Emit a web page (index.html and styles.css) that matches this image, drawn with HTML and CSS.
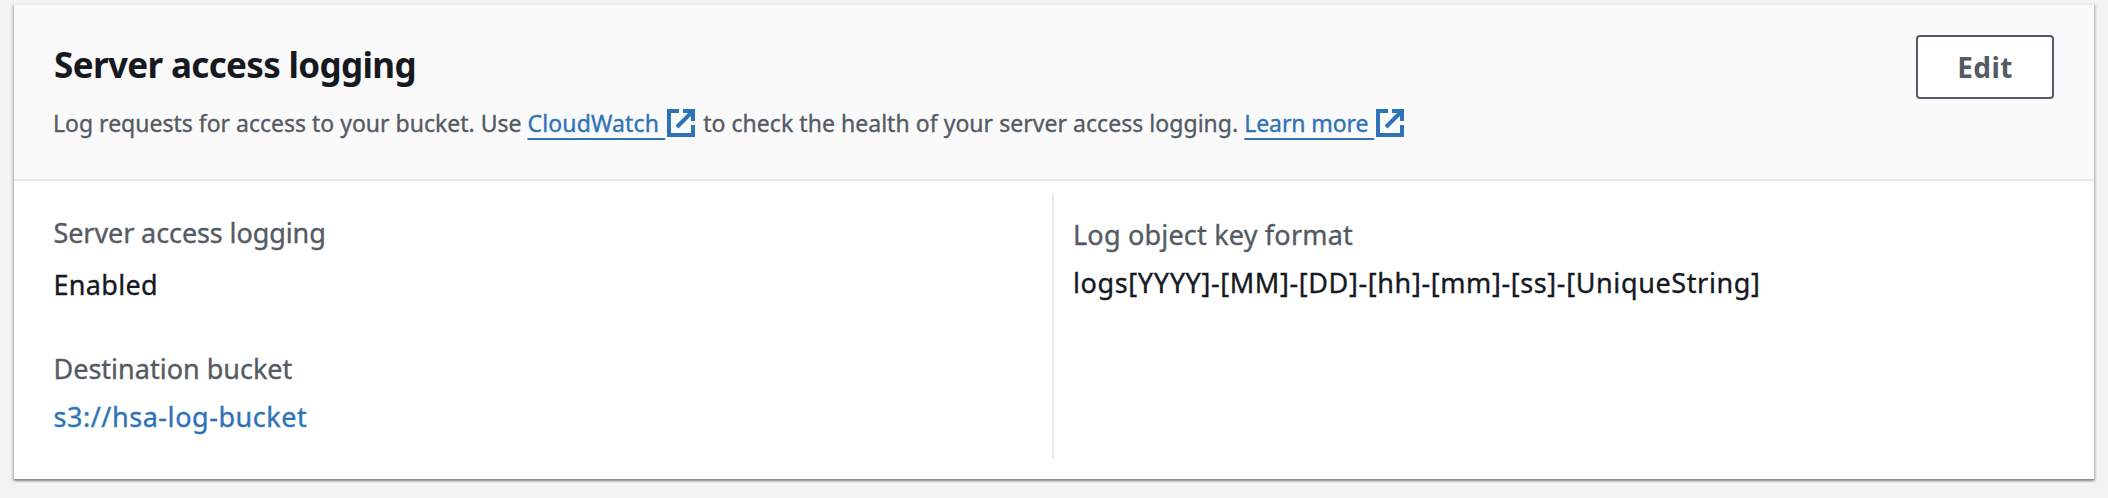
FILE: index.html
```html
<!DOCTYPE html>
<html lang="en">
<head>
<meta charset="utf-8">
<title>Server access logging</title>
<link rel="stylesheet" href="styles.css">
</head>
<body>
<section class="panel">
  <header class="panel-header">
    <div class="heading">
      <h2 class="title">Server access logging</h2>
      <p class="description">Log requests for access to your bucket. Use <a class="link link-watch" href="#">CloudWatch </a><svg class="external" viewBox="0 0 28 28"><path d="M12 2H2V26H26V16"/><path d="M16 2H26V12M26 2L10 18"/></svg> <span class="health">to check the health of your server access logging. </span><a class="link link-more" href="#">Learn more </a><svg class="external" viewBox="0 0 28 28"><path d="M12 2H2V26H26V16"/><path d="M16 2H26V12M26 2L10 18"/></svg></p>
    </div>
    <button class="edit" type="button">Edit</button>
  </header>
  <div class="content">
    <dl class="column left">
      <dt class="label status-label">Server access logging</dt>
      <dd class="value status">Enabled</dd>
      <dt class="label bucket-label">Destination bucket</dt>
      <dd class="value"><a class="bucket" href="#">s3://hsa-log-bucket</a></dd>
    </dl>
    <dl class="column right">
      <dt class="label format-label">Log object key format</dt>
      <dd class="value format">logs[YYYY]-[MM]-[DD]-[hh]-[mm]-[ss]-[UniqueString]</dd>
    </dl>
  </div>
</section>
</body>
</html>
```

FILE: styles.css
```css
* { box-sizing: border-box; }

body {
  margin: 0;
  min-height: 498px;
  padding: 3px 14px 0;
  background: #f2f3f3;
  color: #16191f;
  font-family: "Noto Sans", sans-serif;
}

.panel {
  height: 476px;
  display: flex;
  flex-direction: column;
  background: #fff;
  border-top: 2px solid #eaeded;
  box-shadow: 0 1px 0 #87929a, 0 2px 2px rgba(0, 28, 36, .3), 2px 2px 2px rgba(0, 28, 36, .15), -2px 2px 2px rgba(0, 28, 36, .15);
}

.panel-header {
  height: 176px;
  display: flex;
  justify-content: space-between;
  align-items: flex-start;
  padding: 30px 40px 0 39px;
  background: #fafafa;
  border-bottom: 2px solid #eaeaea;
}

.heading { padding-top: 8px; }

.title {
  margin: 0 0 0 1px;
  font-size: 35px;
  font-weight: 700;
  line-height: 44px;
  letter-spacing: -.65px;
}

.description {
  margin: 21px 0 0;
  color: #545b64;
  font-size: 23px;
  line-height: 30px;
  white-space: nowrap;
  -webkit-text-stroke: .35px;
}

.link {
  color: #2e73b8;
  text-decoration: underline 2px;
  text-underline-offset: 6px;
  text-decoration-skip-ink: none;
}
.link-watch { letter-spacing: .15px; }
.link-more { letter-spacing: -.1px; }
.health { letter-spacing: .04px; }

.external {
  width: 28px;
  height: 28px;
  margin: 0 2px;
  vertical-align: -5px;
  fill: none;
  stroke: #2e73b8;
  stroke-width: 4;
}

.edit {
  width: 138px;
  height: 64px;
  padding: 0;
  background: #fff;
  border: 2px solid #545b64;
  border-radius: 4px;
  color: #545b64;
  font: 700 28px "Noto Sans", sans-serif;
  letter-spacing: .4px;
}

.content {
  flex: 1;
  display: flex;
  font-size: 27px;
  line-height: 36px;
  -webkit-text-stroke: .35px;
}

.column { margin: 0; }
.left { width: 1038px; padding: 34px 0 0 39.5px; }
.right {
  height: 266px;
  margin-top: 12px;
  padding: 24px 0 0 19px;
  border-left: 2px solid #eaeaea;
}

.label { color: #545b64; }
.value { margin: 12px 0 0; }
.status-label { letter-spacing: -.1px; }
.status { margin-top: 16px; letter-spacing: .3px; }
.bucket-label { margin-top: 48px; letter-spacing: 0; }
.bucket { color: #2e73b8; text-decoration: none; letter-spacing: .55px; }
.format-label { letter-spacing: .2px; }
.format { letter-spacing: .62px; }
```
